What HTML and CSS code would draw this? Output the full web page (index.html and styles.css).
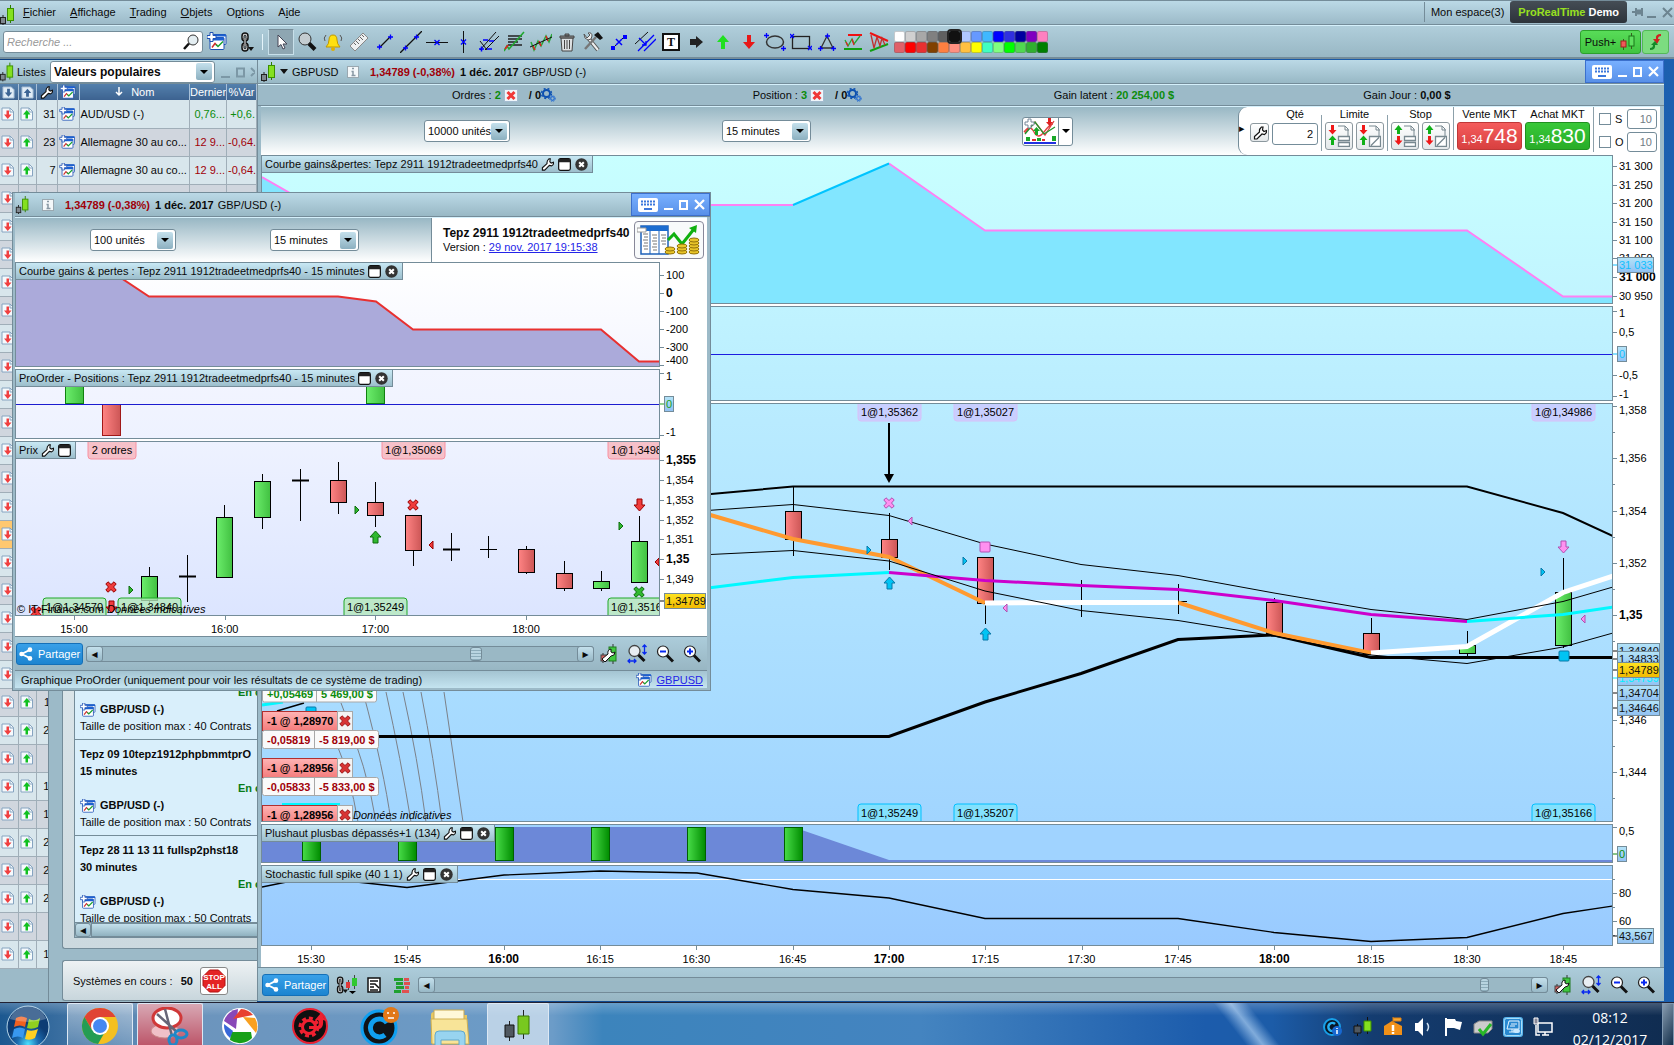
FILE: index.html
```html
<!DOCTYPE html>
<html lang="fr">
<head>
<meta charset="utf-8">
<title>ProRealTime Demo</title>
<link rel="stylesheet" href="styles.css">
</head>
<body>
<svg class="defs" aria-hidden="true">
  <defs>
    <linearGradient id="gGreen"><stop offset="0" stop-color="#6cee6c"/><stop offset="1" stop-color="#41c041"/></linearGradient>
    <linearGradient id="gRed"><stop offset="0" stop-color="#ff8484"/><stop offset="1" stop-color="#cc5656"/></linearGradient>
    <linearGradient id="gBar"><stop offset="0" stop-color="#48dc48"/><stop offset="1" stop-color="#008c00"/></linearGradient>
    <linearGradient id="gTag" x2="0" y2="1"><stop offset="0" stop-color="#b4e4f8"/><stop offset="1" stop-color="#90c0f2"/></linearGradient>
    <linearGradient id="gGold" x2="0" y2="1"><stop offset="0" stop-color="#ffe420"/><stop offset="1" stop-color="#f0b800"/></linearGradient>
    <linearGradient id="gOrder" x2="0" y2="1"><stop offset="0" stop-color="#ffb4b4"/><stop offset="1" stop-color="#f47c7c"/></linearGradient>
    <radialGradient id="gOrb" cx=".5" cy=".9"><stop offset="0" stop-color="#4ce0ff"/><stop offset=".5" stop-color="#1c6cb0"/><stop offset="1" stop-color="#0c3c74"/></radialGradient>
  </defs>
  <symbol id="candle" viewBox="0 0 16 20"><path d="M3 10v10" stroke="#222"/><rect x=".5" y="12.500" width="5" height="6" fill="#808890" stroke="#222"/><path d="M10.500 0v18" stroke="#2c7c00"/><rect x="7.500" y="3.500" width="6" height="12" fill="#84e020" stroke="#3c9000"/></symbol>
  <symbol id="wrench" viewBox="0 0 14 14"><path d="M1.500 10.500 6.500 6Q6 3 8.500 1l1.500 0-.5 3 1.500 1.500 2.500-1Q14 7 11.500 8.500L9 8l-5 5H1.500z" fill="#fff" stroke="#111" stroke-width="1.200"/></symbol>
  <symbol id="win" viewBox="0 0 14 14"><rect x=".7" y=".7" width="12.600" height="12.600" rx="2" fill="#fff" stroke="#111" stroke-width="1.300"/><path d="M1 4.500V2q0-1 1-1h10q1 0 1 1v2.500z" fill="#222"/></symbol>
  <symbol id="close" viewBox="0 0 14 14"><circle cx="7" cy="7" r="6.700" fill="#333"/><path d="M4.500 4.500l5 5m0-5-5 5" stroke="#fff" stroke-width="2.200"/></symbol>
  <symbol id="info" viewBox="0 0 12 12"><rect x=".5" y=".5" width="11" height="11" fill="#f4f8fa" stroke="#9aa8b0"/><path d="M5 2.500h2m-2.500 3H6V9.500M4.500 9.500h4" stroke="#8898a4" stroke-width="1.500" fill="none"/></symbol>
  <symbol id="addchart" viewBox="0 0 20 18"><rect x="6" y="2" width="13" height="10" rx="1" fill="#fff" stroke="#1c50b4"/><rect x="3" y="5" width="14" height="12" rx="1" fill="#fff" stroke="#1c50b4"/><path d="M3 5h14v3H3zM7 2h12v2H7z" fill="#1c60d0"/><path d="M5 15l3-4 2 2" stroke="#d03030" fill="none" stroke-width="1.500"/><path d="M9 12l2 2 5-5" stroke="#18a030" fill="none" stroke-width="1.500"/><path d="M3 0h3v3h3v3H6v3H3V6H0V3h3z" fill="#fff" stroke="#1c50b4"/></symbol>
  <symbol id="chain" viewBox="0 0 16 20"><rect x="4" y="1" width="6" height="8" rx="3" fill="#fff" stroke="#111" stroke-width="1.500"/><rect x="4" y="11" width="6" height="8" rx="3" fill="#fff" stroke="#111" stroke-width="1.500"/><rect x="6" y="3" width="2" height="4" rx="1" fill="#a0bcc8" stroke="#111"/><rect x="6" y="13" width="2" height="4" rx="1" fill="#a0bcc8" stroke="#111"/><path d="M7 6v8" stroke="#111" stroke-width="3"/><path d="M7 6v8" stroke="#fff"/><path d="M10 15h6l-3 4z" fill="#111"/></symbol>
  <symbol id="docdown" viewBox="0 0 14 14"><path d="M1 1h8l3.500 3.500V13H1z" fill="#f6fafd" stroke="#86a4c0"/><path d="M9 1v4h4" fill="none" stroke="#86a4c0"/><path d="M5.500 3.500h2.500v4h2.500l-3.700 4.500L3 7.500h2.500z" fill="#f04040"/></symbol>
  <symbol id="docup" viewBox="0 0 14 14"><path d="M1 1h8l3.500 3.500V13H1z" fill="#f6fafd" stroke="#86a4c0"/><path d="M9 1v4h4" fill="none" stroke="#86a4c0"/><path d="M5.500 11.500h2.500v-4h2.500L6.800 3 3 7.500h2.500z" fill="#10c020"/></symbol>
  <symbol id="hdown" viewBox="0 0 14 14"><path d="M1 1h9l3 3v9H1z" fill="#e0ecf6" stroke="#a0b8d0"/><path d="M5.500 3h3v4h2.500l-4 4.500L3 7h2.500z" fill="#3c6494"/></symbol>
  <symbol id="hup" viewBox="0 0 14 14"><path d="M1 1h9l3 3v9H1z" fill="#e0ecf6" stroke="#a0b8d0"/><path d="M5.500 11.500h3v-4H11L7 3 3 7.500h2.500z" fill="#3c6494"/></symbol>
  <symbol id="redx" viewBox="0 0 14 13"><rect x=".5" y=".5" width="13" height="12" fill="#f0f6fb" stroke="#a4bcd0"/><path d="M3.500 3l7 7m0-7-7 7" stroke="#f03838" stroke-width="3"/></symbol>
  <symbol id="gears" viewBox="0 0 15 14"><circle cx="5.500" cy="5.500" r="3.500" fill="none" stroke="#0c50b0" stroke-width="2"/><circle cx="5.500" cy="5.500" r="5" fill="none" stroke="#0c50b0" stroke-width="1.400" stroke-dasharray="2 2"/><circle cx="11.500" cy="10.500" r="1.800" fill="none" stroke="#2c70d0" stroke-width="1.300"/><circle cx="11.500" cy="10.500" r="2.900" fill="none" stroke="#2c70d0" stroke-dasharray="1.200 1.200"/></symbol>
  <symbol id="kbd" viewBox="0 0 20 14"><rect width="20" height="14" rx="2" fill="#fff"/><path d="M3 3.500h14M3 6.500h14" stroke="#3c78dc" stroke-width="2" stroke-dasharray="2 1"/><path d="M6 11h8" stroke="#3c78dc" stroke-width="2"/></symbol>
  <symbol id="share" viewBox="0 0 16 16"><path d="M13 3 3 8l10 5" fill="none" stroke="#fff" stroke-width="2"/><circle cx="12.500" cy="3" r="2.700" fill="#fff"/><circle cx="3" cy="8" r="2.700" fill="#fff"/><circle cx="12.500" cy="13" r="2.700" fill="#fff"/></symbol>
  <symbol id="cfgcandle" viewBox="0 0 18 20"><path d="M3 9v10M13 0v20" stroke="#333"/><rect x="1" y="11" width="6" height="6" fill="#d06060" stroke="#444"/><rect x="9" y="3" width="7" height="14" fill="#40c840" stroke="#207820"/><path d="M2 15l6-5q-1-4 3-5v3l2 1 2-1q0 4-4 4l-6 6z" fill="#fff" stroke="#111"/></symbol>
  <symbol id="zoomfit" viewBox="0 0 20 20"><circle cx="7.500" cy="7" r="5.500" fill="#e8eef2" stroke="#444" stroke-width="1.300"/><path d="M11.500 11l6 6" stroke="#111" stroke-width="3"/><path d="M17.500 1v9M15.500 3l2-2 2 2M15.500 8l2 2 2-2M1 17h8M3 15l-2 2 2 2M7 15l2 2-2 2" stroke="#0828f0" stroke-width="1.300" fill="none"/></symbol>
  <symbol id="zoomout" viewBox="0 0 18 18"><circle cx="7" cy="6.500" r="5.500" fill="#fff" stroke="#222" stroke-width="1.200"/><path d="M4 6.500h6" stroke="#0828f0" stroke-width="2"/><path d="M11 10.500l6 6" stroke="#111" stroke-width="3"/></symbol>
  <symbol id="zoomin" viewBox="0 0 18 18"><circle cx="7" cy="6.500" r="5.500" fill="#fff" stroke="#222" stroke-width="1.200"/><path d="M4 6.500h6M7 3.500v6" stroke="#0828f0" stroke-width="2"/><path d="M11 10.500l6 6" stroke="#111" stroke-width="3"/></symbol>
  <symbol id="order-ld" viewBox="0 0 22 22"><path d="M10 1h7l3 3v8M17 1v4h4" fill="none" stroke="#788890"/><path d="M10.500 11.500h11v4h-11zm0 6h11v4h-11z" fill="#fff" stroke="#788890" stroke-width="1.300"/><path d="M3 0h3v5h2.500L4.500 9.500.5 5H3z" fill="#f01818"/><path d="M3 20h3v-5h2.500L4.500 10.500.5 15H3z" fill="#10b018"/></symbol>
  <symbol id="order-lp" viewBox="0 0 22 22"><path d="M10 1h7l3 3v8M17 1v4h4" fill="none" stroke="#788890"/><path d="M10.500 11.500h11v10h-11zm1.500 9 8-8" fill="#fff" stroke="#788890" stroke-width="1.300"/><path d="M3 0h3v5h2.500L4.500 9.500.5 5H3z" fill="#f01818"/><path d="M3 20h3v-5h2.500L4.500 10.500.5 15H3z" fill="#10b018"/></symbol>
  <symbol id="order-sd" viewBox="0 0 22 22"><path d="M10 1h7l3 3v8M17 1v4h4" fill="none" stroke="#788890"/><path d="M10.500 11.500h11v4h-11zm0 6h11v4h-11z" fill="#fff" stroke="#788890" stroke-width="1.300"/><path d="M3 9h3V5h2.500L4.500 0 .5 5H3z" fill="#10b018"/><path d="M3 11h3v4.500h2.500l-4 4.500-4-4.500H3z" fill="#f01818"/></symbol>
  <symbol id="order-sp" viewBox="0 0 22 22"><path d="M10 1h7l3 3v8M17 1v4h4" fill="none" stroke="#788890"/><path d="M10.500 11.500h11v10h-11zm1.500 9 8-8" fill="#fff" stroke="#788890" stroke-width="1.300"/><path d="M3 9h3V5h2.500L4.500 0 .5 5H3z" fill="#10b018"/><path d="M3 11h3v4.500h2.500l-4 4.500-4-4.500H3z" fill="#f01818"/></symbol>
  <symbol id="xmark" viewBox="0 0 12 12"><path d="M3 .8 6 3.500 9 .8 11.200 3 8.500 6 11.200 9 9 11.200 6 8.500 3 11.200.8 9 3.500 6 .8 3z"/></symbol>
</svg>

<header class="menubar">
  <svg class="logo" width="16" height="20"><use href="#candle"/></svg>
  <nav class="menus">
    <a href="#"><u>F</u>ichier</a><a href="#"><u>A</u>ffichage</a><a href="#"><u>T</u>rading</a><a href="#"><u>O</u>bjets</a><a href="#">O<u>p</u>tions</a><a href="#">A<u>i</u>de</a>
  </nav>
  <span class="space">Mon espace(3)</span>
  <span class="brand"><em>ProRealTime</em> Demo</span>
  <svg class="syswin" width="44" height="14" fill="none" stroke="#6c8490" stroke-width="2"><path d="M2 7h4M6 3v8M12 3v8"/><path d="M6 7h6" stroke-width="5"/><path d="M17 12h9M33 3l9 9m0-9-9 9"/></svg>
</header>

<div class="toolbar">
  <label class="search"><input type="text" placeholder="Recherche ..." aria-label="Recherche"><svg width="16" height="16"><circle cx="10" cy="6" r="5" fill="#e4eef2" stroke="#333"/><path d="M6 9.500 1 15" stroke="#111" stroke-width="2.500"/></svg></label>
  <button class="tb gapadd" aria-label="Ajouter"><svg width="20" height="19"><use href="#addchart"/></svg></button>
  <button class="tb" aria-label="Lier"><svg width="16" height="20"><use href="#chain"/></svg></button>
  <span class="sep"></span>
  <div class="tools">
    <button class="tool on" aria-label="Pointeur"><svg width="20" height="20"><path d="M7 3v12l3-2.500 2 4.500 2-1-2-4h4z" fill="#fff" stroke="#445"/></svg></button>
    <button class="tool" aria-label="Loupe"><svg width="20" height="20"><circle cx="8" cy="7" r="6" fill="#c4ccd0" stroke="#333"/><path d="M12 11.500l6 6" stroke="#111" stroke-width="4"/></svg></button>
    <button class="tool" aria-label="Alarme"><svg width="22" height="20"><path d="M4 15q3-3 3-7 0-5 4-5t4 5q0 4 3 7z" fill="#ffe010" stroke="#c09800"/><circle cx="11" cy="17" r="2" fill="#e0b000"/><path d="M4 3Q1 6 3 9M18 3q3 3 1 6" fill="none" stroke="#555"/></svg></button>
    <button class="tool" aria-label="Règle"><svg width="20" height="20"><path d="M1 14 14 1l5 5L6 19z" fill="#eceff0" stroke="#888"/><path d="M5 11l2 2m0-4 3 3m-1-5 2 2m0-4 3 3m-1-5 2 2" stroke="#666"/></svg></button>
    <button class="tool" aria-label="Segment"><svg width="20" height="20"><path d="M5 15 15 5" stroke="#111" stroke-width="1.300"/><path d="M2 15h5M4.500 12.500v5M13 5h5M15.500 2.500v5" stroke="#00f" stroke-width="1.300"/></svg></button>
    <button class="tool" aria-label="Droite"><svg width="22" height="22"><path d="M0 22 22 0" stroke="#111" stroke-width="1.300"/><path d="M3 17h5M5.500 14.500v5M14 6h5M16.500 3.500v5" stroke="#00f" stroke-width="1.300"/></svg></button>
    <button class="tool" aria-label="Horizontale"><svg width="22" height="20"><path d="M0 10.500h22" stroke="#111"/><path d="M8.500 8l5 5m0-5-5 5" stroke="#00f" stroke-width="1.300"/></svg></button>
    <button class="tool" aria-label="Verticale"><svg width="20" height="22"><path d="M10.500 0v22" stroke="#111"/><path d="M8 8.500l5 5m0-5-5 5" stroke="#00f" stroke-width="1.300"/></svg></button>
    <button class="tool" aria-label="Fourche"><svg width="20" height="22"><path d="M1 19 17 1M6 19 20 5M1 10l7 9" stroke="#111" fill="none"/><path d="M0 18h5M2.500 15.500v5M8 18h5M10 10h5M4 9h5" stroke="#00f" stroke-width="1.500"/></svg></button>
    <button class="tool" aria-label="Fibonacci"><svg width="22" height="22"><path d="M4 5h14M4 8h14M4 11h10M4 14h14" stroke="#222" stroke-width="1.400"/><path d="M0 20l3-5 2 3L20 1" fill="none" stroke="#20a830" stroke-width="1.600"/><path d="M1 18l3-4" stroke="#e02020" stroke-width="1.500"/></svg></button>
    <button class="tool" aria-label="Régression"><svg width="22" height="20"><path d="M1 10l3 8 4-9 3 5 5-10 3 6 3-8" fill="none" stroke="#28a838" stroke-width="1.500"/><path d="M3 14l2 4M9 9l2 5M16 4l2 5" stroke="#e02020" stroke-width="1.500"/><path d="M0 15 22 5" stroke="#111"/></svg></button>
    <button class="tool" aria-label="Supprimer"><svg width="18" height="20"><path d="M3 6h12l-1 13H4z" fill="#dce0e2" stroke="#444"/><path d="M6.500 8v9M9 8v9M11.500 8v9" stroke="#444"/><path d="M2 4h14v2H2zM7 2h4v2H7z" fill="#888" stroke="#444"/></svg></button>
    <button class="tool" aria-label="Outils"><svg width="22" height="20"><path d="M7 7l9 11" stroke="#555" stroke-width="4"/><path d="M7 7l9 11" stroke="#eee" stroke-width="2"/><path d="M3 17 14 5" stroke="#777" stroke-width="2.500"/><path d="M12 3l4-3 5 6-3 2z" fill="#111"/><path d="M2 2l3 4 3-3-2-2q4-1 4 3T6 8Q2 7 2 2z" fill="#eee" stroke="#555"/></svg></button>
    <button class="tool" aria-label="Relier"><svg width="20" height="20"><path d="M4 16 16 4" stroke="#111"/><path d="M2 14h4v4H2zM14 3h4v4h-4z" fill="#00f"/><path d="M7 7l6 6m0-6-6 6" stroke="#00f" stroke-width="1.500"/></svg></button>
    <button class="tool" aria-label="Parallèles"><svg width="22" height="22"><path d="M1 13 14 1" stroke="#111"/><path d="M4 20 20 4M10 20 22 8" stroke="#00f" stroke-width="1.300"/><path d="M5 7l7 7m0-4v4H8" fill="none" stroke="#00f" stroke-width="1.300"/></svg></button>
    <button class="tool textool" aria-label="Texte">T</button>
    <button class="tool" aria-label="Flèche"><svg width="16" height="16"><path d="M1 5h6V2l7 6-7 6v-3H1z" fill="#222"/></svg></button>
    <button class="tool" aria-label="Flèche haut"><svg width="14" height="16"><path d="M5 15V8H1l6-7 6 7H9v7z" fill="#20e020"/></svg></button>
    <button class="tool" aria-label="Flèche bas"><svg width="14" height="16"><path d="M5 1v7H1l6 7 6-7H9V1z" fill="#e81818"/></svg></button>
    <button class="tool" aria-label="Ellipse"><svg width="22" height="20"><ellipse cx="11" cy="10" rx="8.500" ry="6" fill="none" stroke="#333" stroke-width="1.500"/><path d="M0 3.500h5M2.500 1v5M17 16.500h5M19.500 14v5" stroke="#00f" stroke-width="1.300"/></svg></button>
    <button class="tool" aria-label="Rectangle"><svg width="22" height="20"><rect x="2.500" y="4.500" width="17" height="12" fill="none" stroke="#222" stroke-width="1.300"/><path d="M0 2l4 4m0-4-4 4M18 14l4 4m0-4-4 4" stroke="#00f" stroke-width="1.300"/></svg></button>
    <button class="tool" aria-label="Triangle"><svg width="20" height="20"><path d="M10 4 4 16h12z" fill="none" stroke="#333" stroke-width="1.300"/><path d="M8 4h5M10.500 1.500v5M1 16.500h5M3.500 14v5M14 16.500h5M16.500 14v5" stroke="#00f" stroke-width="1.300"/></svg></button>
    <button class="tool" aria-label="Canal"><svg width="20" height="18"><path d="M5 2h14" stroke="#f01010" stroke-width="2"/><path d="M1 16h18" stroke="#10a010" stroke-width="2"/><path d="M2 7l3 6 4-7 2 5 6-8" fill="none" stroke="#20a830" stroke-width="1.300"/><path d="M9 6l2 6M3 9l2 4" stroke="#e02020" stroke-width="1.300"/></svg></button>
    <button class="tool" aria-label="Biseau"><svg width="20" height="20"><path d="M1 1l18 8" stroke="#f01010" stroke-width="2"/><path d="M1 19l18-7" stroke="#10a010" stroke-width="2"/><path d="M2 3l3 13 3-11 3 9 2-8 3 7" fill="none" stroke="#c03030" stroke-width="1.300"/></svg></button>
  </div>
  <div class="palette" id="palette"></div>
  <button class="push">Push+ <svg width="16" height="18"><path d="M3.500 6v11M11.500 0v16" stroke="#3c5c20"/><rect x="1" y="8" width="5" height="6" fill="#f05858" stroke="#a02020"/><rect x="9" y="3" width="5" height="10" fill="#60e060" stroke="#187818"/></svg></button>
  <button class="swap" aria-label="Inverser"><svg width="14" height="20"><path d="M12 2Q6 2 7 7H4l4 5 3-5H9q0-3 3-3z" fill="#d02020"/><path d="M1 18q6 0 5-5h3l-3-4-4 4h2q0 3-3 3z" fill="#148a28"/></svg></button>
</div>

<main class="desk">
  <section class="win lists">
    <header class="title">
      <svg width="15" height="20"><use href="#candle"/></svg>
      <label for="liste">Listes</label>
      <span class="pick big"><select id="liste"><option>Valeurs populaires</option></select></span>
      <svg width="36" height="14" fill="none" stroke="#7c98a6" stroke-width="2"><path d="M2 12h9M18 3.500h7v8h-7zM32 3l8 8m-8 0 8-8"/></svg>
    </header>
    <table>
      <colgroup><col class="c1"><col class="c1"><col class="c3"><col class="c4"><col><col class="c6"><col class="c7"></colgroup>
      <thead><tr>
        <th><svg width="13" height="13"><use href="#hdown"/></svg></th>
        <th><svg width="13" height="13"><use href="#hup"/></svg></th>
        <th><svg width="13" height="13"><use href="#wrench"/></svg></th>
        <th><svg width="16" height="14"><use href="#addchart"/></svg></th>
        <th><svg width="14" height="12"><path d="M5 1v8M2 6l3 3 3-3" stroke="#fff" stroke-width="1.500" fill="none"/></svg> Nom</th>
        <th>Dernier</th><th>%Var</th>
      </tr></thead>
      <tbody id="rows"></tbody>
    </table>
  </section>

  <section class="win systems">
    <div class="group">
      <div class="syslist">
        <article><h3>&nbsp;</h3><h3>&nbsp;</h3><p class="state">En cours</p><h4><svg width="16" height="14"><use href="#addchart"/></svg>GBP/USD (-)</h4><p>Taille de position max : 40 Contrats</p></article>
        <article><h3>Tepz 09 10tepz1912phpbmmtprO</h3><h3>15 minutes</h3><p class="state">En cours</p><h4><svg width="16" height="14"><use href="#addchart"/></svg>GBP/USD (-)</h4><p>Taille de position max : 50 Contrats</p></article>
        <article><h3>Tepz 28 11 13 11 fullsp2phst18</h3><h3>30 minutes</h3><p class="state">En cours</p><h4><svg width="16" height="14"><use href="#addchart"/></svg>GBP/USD (-)</h4><p>Taille de position max : 50 Contrats</p></article>
      </div>
      <div class="hbar"><button class="arr" aria-label="Gauche">◂</button><span class="fullthumb"></span></div>
    </div>
    <div class="group running">Systèmes en cours : <b>50</b>
      <button class="stop" aria-label="Tout arrêter"><svg width="24" height="24"><path d="M7.500 1h9L23 7.500v9L16.500 23h-9L1 16.500v-9z" fill="#e42424" stroke="#b01010"/><text x="12" y="11" class="stoptxt">STOP</text><text x="12" y="20" class="stoptxt">ALL</text></svg></button>
    </div>
  </section>

  <section class="win mainwin">
    <header class="title">
      <svg width="16" height="20"><use href="#candle"/></svg>
      <svg class="drop" width="15" height="8"><path d="M3 1h8L7 6z" fill="#111"/></svg>
      <span class="sym">GBPUSD</span>
      <svg class="inf" width="12" height="12"><use href="#info"/></svg>
      <b class="neg quote">1,34789 (-0,38%)</b><b>1 déc. 2017</b><span>GBP/USD (-)</span>
      <span class="winbtns"><svg width="20" height="14"><use href="#kbd"/></svg><svg width="42" height="14" fill="none" stroke="#fff" stroke-width="2"><path d="M1 11h9M17 3h7v8h-7z"/><path d="M32 2l9 9m0-9-9 9" stroke-width="2.200"/></svg></span>
    </header>
    <div class="stats">
      <span>Ordres : <b class="pos">2</b><svg class="cancel" width="14" height="13"><use href="#redx"/></svg><b>/ 0</b><svg width="15" height="14"><use href="#gears"/></svg></span>
      <span>Position : <b class="pos">3</b><svg class="cancel" width="14" height="13"><use href="#redx"/></svg><b>/ 0</b><svg width="15" height="14"><use href="#gears"/></svg></span>
      <span>Gain latent : <b class="pos">20 254,00 $</b></span>
      <span>Gain Jour : <b>0,00 $</b></span>
    </div>
    <div class="controls">
      <span class="pick u1"><select aria-label="Unités"><option>10000 unités</option></select></span>
      <span class="pick u2"><select aria-label="Période"><option>15 minutes</option></select></span>
      <button class="indic" aria-label="Indicateurs"><svg width="34" height="26"><path d="M2 15 12 4l10 13L31 3M1 14q6-8 10 0t10 0 9-8" fill="none" stroke="#e04040" stroke-width="1.300"/><path d="M2 16 12 4l9 12 11-7" fill="none" stroke="#209830" stroke-width="1.300"/><path d="M1 25h32" stroke="#2030e0" stroke-width="2"/><path d="M3 19h4v4H3zM14 20h4v3h-4zM29 18h4v5h-4z" fill="#18a828"/><path d="M9 21h4v2H9zM19 21h3v2h-3z" fill="#e03030"/><path d="M5 1h3v3h3v3H8v3H5V7H2V4h3z" fill="#fff" stroke="#789"/><path d="M25 0h3v4h2l-3.500 4L23 4h2z" fill="#e02020"/><path d="M12 17v-4h-2l3.500-4 3.500 4h-2v4z" fill="#18a828"/></svg><i></i></button>
      <form class="order">
        <i class="fold">▸</i>
        <button type="button" class="ob wr" aria-label="Réglages"><svg width="14" height="14"><use href="#wrench"/></svg></button>
        <div class="col qty"><label for="qte">Qté</label><input id="qte" type="text" value="2"></div>
        <fieldset><legend>Limite</legend><button type="button" class="ob" aria-label="Limite durée"><svg width="22" height="22"><use href="#order-ld"/></svg></button><button type="button" class="ob" aria-label="Limite ligne"><svg width="22" height="22"><use href="#order-lp"/></svg></button></fieldset>
        <fieldset><legend>Stop</legend><button type="button" class="ob" aria-label="Stop durée"><svg width="22" height="22"><use href="#order-sd"/></svg></button><button type="button" class="ob" aria-label="Stop ligne"><svg width="22" height="22"><use href="#order-sp"/></svg></button></fieldset>
        <div class="deals">
          <div class="col"><span>Vente MKT</span><button type="button" class="deal sell">1,34<b>748</b></button></div>
          <div class="col"><span>Achat MKT</span><button type="button" class="deal buy">1,34<b>830</b></button></div>
        </div>
        <div class="opts">
          <label><input type="checkbox"><span>S</span></label><input type="text" value="10" aria-label="Stop">
          <label><input type="checkbox"><span>O</span></label><input type="text" value="10" aria-label="Objectif">
        </div>
      </form>
    </div>
    <div class="charts">
      <div class="panel m1"><div class="plot"><svg><g transform="translate(-262,-156)">
        <path d="M262 177 311 205H793L889 163.500 985 230.500H1467L1563 296.500H1700V320H262z" fill="#82e6ff"/>
        <path d="M262 177 311 205H793M889 163.500 985 230.500H1467L1563 296.500H1700" class="ln" stroke="#ff80f4" stroke-width="2"/>
        <path d="M793 205 889 163.500" stroke="#00c4ff" stroke-width="2"/></g></svg>
        <div class="tab">Courbe gains&amp;pertes: Tepz 2911 1912tradeetmedprfs40<svg><use href="#wrench"/></svg><svg><use href="#win"/></svg><svg><use href="#close"/></svg></div></div>
        <svg class="axis" data-axis="m1"></svg></div>
      <div class="panel m2"><div class="plot"><svg><path d="M0 47.500h3000" stroke="#1c1ce0"/></svg></div><svg class="axis" data-axis="m2"></svg></div>
      <div class="panel m3"><div class="plot"><svg><g transform="translate(-262,-404)">
        <g class="ln" stroke="#7c8088">
          <path d="M337 745Q350 775 358 822"/><path d="M341 703Q368 770 376 822"/><path d="M363 692Q384 770 391 822"/><path d="M386 692Q401 760 411 822"/><path d="M403 692Q418 760 426 822"/><path d="M421 692Q434 760 442 822"/><path d="M444 692 463 822"/>
        </g>
        <g class="ln" stroke="#000">
          <path d="M600 500 711 494 793 486.500H1467L1563 513 1613 536" stroke-width="2"/>
          <path d="M378 736.500H889L985 702 1081 673.500 1178 639.500 1274 635 1371 657.500H1700" stroke-width="3"/>
          <path d="M277 711 304 703" stroke-width="1.500"/>
        </g>
        <g id="mainCandles"></g>
        <g class="ln">
          <path d="M700 512 793 539 889 557 985 603M1178 602.500 1274 633 1371 653" stroke="#ff9a30" stroke-width="4"/>
          <path d="M985 603 1081 602.500H1178M1371 653 1467 646.500 1563 592.500 1613 576" stroke="#fff" stroke-width="5"/>
          <path d="M700 589 793 577.500 889 572.500M1467 621.500 1563 614.500 1613 607M262 705 283 702M282 804.500H340" stroke="#00f8ff" stroke-width="3"/>
          <path d="M889 572.500 985 580.500 1081 585.500 1178 589.500 1274 600.500 1371 614.500 1467 621.500" stroke="#cc00cc" stroke-width="3"/>
          <path d="M700 511 793 504.500 889 515.500 985 544 1081 564.500 1178 575.500 1274 593 1371 609.500 1467 619.500 1563 601.500 1613 587M700 555 793 550.500 889 561 985 591 1081 610.500 1178 620.500 1274 636 1371 655 1467 663.500 1563 647 1613 633" stroke="#000"/>
          <path d="M889 423v52" stroke="#000" stroke-width="2"/>
        </g>
        <path d="M884 474h10l-5 9z"/>
        <g id="mainMarks"></g></g></svg></div><svg class="axis" data-axis="m3"></svg></div>
      <div class="panel m4"><div class="plot"><svg><g transform="translate(-262,-825)">
        <path d="M262 827H793L889 860H1700V863H262z" fill="#6c88d8"/><g id="greenBars"></g></g></svg>
        <div class="tab">Plushaut plusbas dépassés+1 (134)<svg><use href="#wrench"/></svg><svg><use href="#win"/></svg><svg><use href="#close"/></svg></div></div>
        <svg class="axis" data-axis="m4"></svg></div>
      <div class="panel m5"><div class="plot"><svg><g transform="translate(-262,-866)" class="ln">
        <path d="M262 879.500H1700" stroke="#fff"/>
        <path d="M262 887 311 877 407 887.500 504 875 600 871 697 873 793 889.500 889 898 985 918.500H1178L1274 932.500 1371 941.500 1467 937.500 1563 913.500 1613 906" stroke="#000" stroke-width="1.300"/></g></svg>
        <div class="tab">Stochastic full spike (40 1 1)<svg><use href="#wrench"/></svg><svg><use href="#win"/></svg><svg><use href="#close"/></svg></div></div>
        <svg class="axis" data-axis="m5"></svg></div>
      <svg class="times" data-times="main"></svg>
    </div>
    <footer class="bottom">
      <button class="partager"><svg width="14" height="16"><use href="#share"/></svg>Partager</button>
      <svg class="f1" width="24" height="20"><use href="#chain" width="14" height="20"/><path d="M14.500 5v10M20.500 0v14" stroke="#444"/><path d="M12 7h4v6h-4z" fill="#e03838"/><path d="M18 3h5v8h-5z" fill="#30c830"/><path d="M15 16h7l-3.500 3z"/></svg>
      <svg class="f2" width="14" height="16"><path d="M1 1h12v14H1z" fill="#fff" stroke="#111" stroke-width="1.500"/><path d="M3 4h8M3 7h5l4 4M3 10h4M3 13h8" stroke="#111" stroke-width="1.500" fill="none"/></svg>
      <svg class="f3" width="16" height="16"><path d="M0 1h9v3H0zM2 5h7v3H2zM2 9h8v3H2zM0 13h7v3H0z" fill="#20a030"/><path d="M10 1h5v3h-5zM10 5h6v3h-6zM11 9h4v3h-4zM8 13h7v3H8z" fill="#e05050"/></svg>
      <div class="scroll sm"><button class="arr" aria-label="Gauche">◂</button><i class="thumb"></i><button class="arr" aria-label="Droite">▸</button></div>
      <svg class="z" width="18" height="20"><use href="#cfgcandle"/></svg><svg class="z" width="20" height="20"><use href="#zoomfit"/></svg><svg class="z" width="18" height="18"><use href="#zoomout"/></svg><svg class="z" width="18" height="18"><use href="#zoomin"/></svg>
    </footer>
  </section>

  <section class="win popup">
    <header class="title">
      <svg width="16" height="18"><use href="#candle"/></svg>
      <svg class="inf" width="12" height="12"><use href="#info"/></svg>
      <b class="neg quote">1,34789 (-0,38%)</b><b>1 déc. 2017</b><span>GBP/USD (-)</span>
      <span class="winbtns"><svg width="20" height="14"><use href="#kbd"/></svg><svg width="42" height="14" fill="none" stroke="#fff" stroke-width="2"><path d="M1 11h9M17 3h7v8h-7z"/><path d="M32 2l9 9m0-9-9 9" stroke-width="2.200"/></svg></span>
    </header>
    <div class="controls">
      <span class="pick p1"><select aria-label="Unités"><option>100 unités</option></select></span>
      <span class="pick p2"><select aria-label="Période"><option>15 minutes</option></select></span>
      <div class="version"><div><b>Tepz 2911 1912tradeetmedprfs40</b><p>Version : <a href="#">29 nov. 2017 19:15:38</a></p></div>
        <button class="report" aria-label="Rapport"><svg width="64" height="32"><rect x="4" y="2" width="27" height="28" fill="#fff" stroke="#1c60b8" stroke-width="1.500"/><path d="M4 2h27v5H4z" fill="#1c6cd0"/><path d="M13 7v23M22 7v23" stroke="#1c60b8"/><path d="M6 10h5M7 13h4M6 16h5M7 19h4M6 22h5M7 25h4M15 11h5M16 14h4M15 17h5M16 20h4M15 23h5M16 26h4M24 11h5M25 14h4M24 17h5M25 20h4" stroke="#777"/><path d="M0 4h9v4H0z" fill="#fff" stroke="#999"/><path d="M31 16l6-6 8 10L57 5" fill="none" stroke="#10b010" stroke-width="3"/><path d="M52 4l8-3-1 8z" fill="#10b010"/><g fill="#e8c428" stroke="#907008"><ellipse cx="33" cy="28" rx="5" ry="2"/><ellipse cx="33" cy="25" rx="5" ry="2"/><ellipse cx="45" cy="28" rx="5" ry="2"/><ellipse cx="45" cy="25" rx="5" ry="2"/><ellipse cx="45" cy="22" rx="5" ry="2"/><ellipse cx="57" cy="28" rx="5" ry="2"/><ellipse cx="57" cy="25" rx="5" ry="2"/><ellipse cx="57" cy="22" rx="5" ry="2"/><ellipse cx="57" cy="19" rx="5" ry="2"/><ellipse cx="57" cy="16" rx="5" ry="2"/></g></svg></button></div>
    </div>
    <div class="charts">
      <div class="panel q1"><div class="plot"><svg><g transform="translate(-16,-263)">
        <path d="M16 262H97L149 296.500H338L376 301.500 413 329.500H601L639 361.500H661V370H16z" fill="#abaada"/>
        <path d="M97 262 149 296.500H338L376 301.500 413 329.500H601L639 361.500H661" class="ln" stroke="#e83030" stroke-width="2"/></g></svg>
        <div class="tab">Courbe gains &amp; pertes : Tepz 2911 1912tradeetmedprfs40 - 15 minutes<svg><use href="#win"/></svg><svg><use href="#close"/></svg></div></div>
        <svg class="axis" data-axis="q1"></svg></div>
      <div class="panel q2"><div class="plot"><svg><g transform="translate(-16,-370)">
        <rect x="65.500" y="384.500" width="18" height="19" fill="url(#gGreen)" stroke="#108010"/><rect x="366.500" y="384.500" width="18" height="19" fill="url(#gGreen)" stroke="#108010"/><rect x="102.500" y="404.500" width="18" height="31" fill="url(#gRed)" stroke="#a01818"/><path d="M16 404.500h645" stroke="#1c1cd0"/></g></svg>
        <div class="tab">ProOrder - Positions : Tepz 2911 1912tradeetmedprfs40 - 15 minutes<svg><use href="#win"/></svg><svg><use href="#close"/></svg></div></div>
        <svg class="axis" data-axis="q2"></svg></div>
      <div class="panel q3"><div class="plot"><svg><g transform="translate(-16,-442)"><g id="popCandles"></g><g id="popMarks"></g></g></svg>
        <div class="tab">Prix<svg><use href="#wrench"/></svg><svg><use href="#win"/></svg></div></div>
        <svg class="axis" data-axis="q3"></svg></div>
      <svg class="times" data-times="pop"></svg>
    </div>
    <footer class="bottom">
      <button class="partager"><svg width="14" height="16"><use href="#share"/></svg>Partager</button>
      <div class="scroll sp"><button class="arr" aria-label="Gauche">◂</button><i class="thumb"></i><button class="arr" aria-label="Droite">▸</button></div>
      <svg class="z" width="18" height="20"><use href="#cfgcandle"/></svg><svg class="z" width="20" height="20"><use href="#zoomfit"/></svg><svg class="z" width="18" height="18"><use href="#zoomout"/></svg><svg class="z" width="18" height="18"><use href="#zoomin"/></svg>
    </footer>
    <div class="status"><span>Graphique ProOrder (uniquement pour voir les résultats de ce système de trading)</span><svg width="16" height="14"><use href="#addchart"/></svg><a href="#">GBPUSD</a></div>
  </section>
</main>

<footer class="taskbar">
  <button class="orb" aria-label="Démarrer"><svg width="44" height="44"><circle cx="22" cy="22" r="21" fill="url(#gOrb)" stroke="#b4d4e8"/><path d="M10 13q5-3 11 0l-2 9q-5-3-11 0z" fill="#f06020"/><path d="M23 14q6 3 11-1l-2 9q-6 3-11 1z" fill="#90d020"/><path d="M8 24q6-3 11 0l-2 9q-5-3-11 0z" fill="#3898f0"/><path d="M21 25q5 2 11-1l-3 9q-5 3-10 1z" fill="#ffd020"/><path d="M4 14q4-12 18-13 14 1 18 13Q22 20 4 14z" fill="#fff" opacity=".25"/></svg></button>
  <button class="task open" aria-label="Chrome"><svg width="38" height="38"><circle cx="19" cy="19" r="18" fill="#f4c020"/><path d="M19 10h15.600a18 18 0 0 0-31.200 0L11 23z" fill="#e04434"/><path d="M3.400 10a18 18 0 0 0 13.600 27l8-14H11z" fill="#249c54"/><circle cx="19" cy="19" r="9" fill="#fff"/><circle cx="19" cy="19" r="7" fill="#4688f0"/></svg></button>
  <button class="task open snip" aria-label="Capture"><svg width="42" height="40"><ellipse cx="16" cy="24" rx="14" ry="7" fill="#f0c0c8" stroke="#c88"/><ellipse cx="18" cy="11" rx="14" ry="10" fill="#fff" stroke="#d03838" stroke-width="3"/><path d="M8 7l20 18M16 2l7 27" stroke="#667" stroke-width="2.500"/><ellipse cx="32" cy="27" rx="6" ry="4" fill="none" stroke="#2088c8" stroke-width="3"/><ellipse cx="24" cy="33" rx="4" ry="5" fill="none" stroke="#2088c8" stroke-width="3"/></svg></button>
  <button class="task" aria-label="Picasa"><svg width="38" height="38"><circle cx="19" cy="19" r="18" fill="#fff"/><path d="M17 2A17 17 0 0 0 3 14l12 8z" fill="#8848b8"/><path d="M20 2a17 17 0 0 1 12 6L12 12z" fill="#e84030"/><path d="M34 11a17 17 0 0 1 1 15L22 10z" fill="#f8a020"/><path d="M31 31a17 17 0 0 1-22 2l1-8h20z" fill="#18a018"/><path d="M3 17l9 7-3 7A17 17 0 0 1 3 17z" fill="#3868d8"/></svg></button>
  <button class="task" aria-label="Gestionnaire"><svg width="38" height="38"><circle cx="19" cy="19" r="17" fill="#101010" stroke="#e82030" stroke-width="2"/><circle cx="18" cy="20" r="6.500" fill="none" stroke="#f02030" stroke-width="3"/><circle cx="18" cy="20" r="9" fill="none" stroke="#f02030" stroke-width="3" stroke-dasharray="4 3"/><path d="M18 22v-3h9q2-3 0-6h-3l6-7 5 8-3-1q1 9-5 9z" fill="#f02030"/></svg></button>
  <button class="task" aria-label="Cleaner"><svg width="40" height="40"><circle cx="19" cy="21" r="17" fill="#101418" stroke="#10a0f0" stroke-width="3"/><path d="M27 16a9 9 0 1 0-2 12" fill="none" stroke="#10a0f0" stroke-width="5"/><circle cx="31" cy="8" r="8" fill="#e07818"/><path d="M28 5v2m6-2v2m-6 4h6" stroke="#fff" stroke-width="1.500"/></svg></button>
  <button class="task" aria-label="Explorateur"><svg width="42" height="40"><path d="M2 8q0-3 3-3h10l3 3h20v28H2z" fill="#e8c860"/><path d="M5 12V3h30v9" fill="#fff8d8" stroke="#c8a850"/><path d="M2 12h36l2 25H3z" fill="#f8e498" stroke="#d0b050"/><path d="M6 28q0-4 4-4h22q4 0 4 4v11h-6v-6H12v6H6z" fill="#98d4f0" stroke="#60a8cc"/></svg></button>
  <button class="task open prt" aria-label="ProRealTime"><svg width="30" height="36"><path d="M6.500 14v20M20.500 3v29" stroke="#222"/><path d="M2 18h9v12H2z" fill="#505860" stroke="#111"/><path d="M15 9h11v18H15z" fill="#78c820" stroke="#387800"/></svg></button>
  <div class="tray">
    <svg width="20" height="20"><circle cx="9" cy="10" r="8" fill="#081828" stroke="#18a0e8" stroke-width="2"/><path d="M12 7a4 4 0 1 0 0 6" fill="none" stroke="#28b0f0" stroke-width="2.500"/><circle cx="14" cy="14" r="5" fill="#1868d0"/><path d="M14 11v1m0 1v4" stroke="#fff" stroke-width="1.500"/></svg>
    <svg width="20" height="20"><path d="M4.500 7v12M14.500 0v17" stroke="#111"/><path d="M1 9h7v7H1z" fill="#505860" stroke="#111"/><path d="M11 4h7v10h-7z" fill="#84e020" stroke="#3c9000"/></svg>
    <svg width="20" height="20"><path d="M1 9l8-5 10 5v9H1z" fill="#f09018"/><path d="M10 0v6M10 1h8v3h-8" fill="#f8a830" stroke="#e08010"/><path d="M10 8v6m0 1v2" stroke="#fff" stroke-width="2.500"/></svg>
    <svg width="20" height="20"><path d="M2 6h3l5-5v18l-5-5H2z" fill="#fff"/><path d="M14 6q3 4 0 8" fill="none" stroke="#cde" stroke-width="1.500"/></svg>
    <svg width="20" height="20"><path d="M3 1v18" stroke="#fff" stroke-width="2"/><path d="M4 2h8l1 2 6 1-2 8-6-2H4z" fill="#fff"/></svg>
    <svg width="20" height="20"><path d="M1 7l5-3h13v8l-4 4H1z" fill="#ccc" stroke="#888"/><path d="M6 12l4 5 8-10" fill="none" stroke="#28b828" stroke-width="3"/></svg>
    <svg width="20" height="20"><rect width="20" height="20" rx="3" fill="#58b4ec"/><rect x="1.500" y="1.500" width="17" height="17" rx="2" fill="#2888d0" stroke="#a8dcf8"/><path d="M6 4h10v8H4zM6 15h5M9 12v3M8 7h6M7 9h5" fill="none" stroke="#e4f4ff"/><rect x="10" y="12" width="7" height="4" rx="2" fill="#c8e8ff"/></svg>
    <svg width="20" height="20"><path d="M5 6h14v9H5z" fill="#183c68" stroke="#fff" stroke-width="1.500"/><path d="M9 18h7M12 15v3M3 8v10h4" stroke="#fff" stroke-width="1.500" fill="none"/><path d="M1 1h4v6H1z" fill="#889" stroke="#fff"/></svg>
  </div>
  <div class="clock"><span>08:12</span><span>02/12/2017</span></div>
  <button class="showdesk" aria-label="Bureau"></button>
</footer>
<script src="app.js"></script>
</body>
</html>
```
FILE: styles.css
```css
* { box-sizing: border-box; }
html, body { margin: 0; height: 100%; overflow: hidden; }
body { display: flex; flex-direction: column; font: 11px/14px "Liberation Sans", Arial, sans-serif; color: #0a0a0a; background: #0c4a8c; }
button, input, select { font: inherit; color: inherit; margin: 0; padding: 0; border: 0; background: none; }
a { color: inherit; text-decoration: none; }
svg { flex: none; display: block; }
h3, h4, p { margin: 0; font-size: 11px; }
p { font-weight: normal; }
.defs { position: absolute; width: 0; height: 0; }
.neg { color: #a00008; }
.pos { color: #0c8c0c; }
.ln { fill: none; }
svg text { font: 11px "Liberation Sans", Arial, sans-serif; }
svg text.b { font-weight: bold; }
svg text.big { font-size: 12px; }
svg text.it { font-style: italic; }

.menubar { display: flex; align-items: center; height: 25px; flex: none; padding-bottom: 1px; border-top: 1px solid #748c99; border-bottom: 1px solid #748c99; background: linear-gradient(#bbd9e6, #9cbac8); }
.logo { margin-top: 6px; }
.menus { display: flex; flex: 1; padding-left: 7px; gap: 14px; }
.space { border-left: 1px solid #748c99; padding: 3px 6px; }
.brand { background: linear-gradient(#454d55, #2c333a); color: #fff; border-radius: 3px; padding: 4px 8px; font-weight: bold; height: 22px; }
.brand em { color: #98e020; font-style: normal; }
.syswin { margin-left: 3px; }

.toolbar { display: flex; align-items: center; height: 34px; flex: none; border-top: 1px solid #d5f0fb; border-bottom: 2px solid #748c99; background: linear-gradient(#b0cedb, #98b7c4); padding: 0 5px 0 3px; }
.search { display: flex; align-items: center; width: 200px; height: 22px; background: #fff; border: 1px solid #748c99; border-radius: 3px; padding: 0 3px; }
.search input { flex: 1; min-width: 0; font-style: italic; outline: 0; }
.search input::placeholder { color: #999; }
.tb { width: 20px; display: grid; place-items: center; margin-left: 9px; }
.tb.gapadd { margin-left: 4px; }
.sep { width: 1px; height: 16px; background: #e4f4fa; margin: 0 5px 0 6px; }
.tools { display: flex; }
.tool { width: 26px; height: 26px; display: grid; place-items: center; }
.tool.on { background: #8ea6b2; border: 1px solid #c8e0ea; border-top-color: #768c98; }
.tool.textool { width: 18px; height: 18px; margin: 4px; background: #fff; border: 2px solid #111; font: bold 12px/14px "Liberation Serif", serif; }
.palette { display: grid; grid-template-columns: repeat(14, 11px); grid-auto-rows: 11px; margin-left: 2px; }
.palette i { border-radius: 2px; border: 1px solid rgba(90,100,110,.35); }
.palette i.sel { outline: 2px solid #222; border: 0; z-index: 1; }
.push { margin-left: auto; height: 24px; width: 61px; display: flex; align-items: center; justify-content: center; gap: 4px; background: linear-gradient(#58dc58, #40c440); border: 1px solid #2ca02c; border-radius: 3px; }
.swap { width: 27px; height: 24px; margin-left: 1px; display: grid; place-items: center; background: #7cdc80; border: 1px solid #54b858; border-radius: 3px; }

.desk { flex: 1; min-height: 0; position: relative; overflow: hidden; background: linear-gradient(90deg, #0c4080, #1c60b0); }
.win { position: absolute; display: flex; flex-direction: column; background: #9cbac8; overflow: hidden; }
.title { display: flex; align-items: center; flex: none; height: 24px; border-bottom: 1px solid #748c99; background: linear-gradient(#bbd9e6, #98b8c5); }
.pick { display: inline-grid; height: 22px; background: #fff; border: 1px solid #748c99; border-radius: 3px; }
.pick select, .pick::before, .pick::after { grid-area: 1 / 1; }
.pick select { appearance: none; width: 100%; outline: 0; padding-left: 3px; line-height: 16px; }
.pick::before, .pick::after { content: ""; justify-self: end; align-self: center; pointer-events: none; z-index: 1; }
.pick::before { width: 16px; height: 17px; margin-right: 2px; border-radius: 2px; background: linear-gradient(#c4e0ec, #8cb0c0); }
.pick::after { margin-right: 6px; border: 4px solid transparent; border-top-color: #000; border-bottom: 0; }
.pick.big { width: 165px; height: 22px; }
.pick.big select { font-weight: bold; font-size: 12px; }

.lists { left: 0; top: 1px; width: 257px; bottom: 0; }
.lists .title { gap: 1px; }
.lists .title label { width: 33px; padding-left: 1px; }
.lists .title svg:last-child { margin-left: 3px; }
.lists table { table-layout: fixed; width: 257px; border-collapse: collapse; }
.c1 { width: 18px; } .c3 { width: 21px; } .c4 { width: 22px; } .c6 { width: 37px; } .c7 { width: 30px; }
.lists th { height: 16px; padding: 0; background: linear-gradient(#5480ac, #3c6290); color: #fff; font-weight: normal; line-height: 12px; overflow: hidden; white-space: nowrap; border-right: 1px solid #a8c0d8; }
.lists th svg { display: inline-block; vertical-align: -2px; }
.lists td { height: 28px; padding: 0 1px; border-right: 1px solid #a0aeb8; border-bottom: 1px solid #a0aeb8; white-space: nowrap; overflow: hidden; background: #d8e6ec; }
.lists tr:nth-child(even) td { background: #d0d6de; }
.lists tr.hot td { background: #ffc870; }
.lists td:nth-child(3) { text-align: right; padding-right: 1px; }
.up { color: #0c8c0c; } .down { color: #a00008; }
.lists td.up, .lists td.down { text-align: right; }

.systems { left: 48px; top: 577px; width: 209px; bottom: 0; border-left: 1px solid #748c99; padding: 4px 0 1px 13px; background: #9cbac8; gap: 11px; }
.group { border: 1px solid #748c99; border-right: 0; border-radius: 3px 0 0 3px; background: linear-gradient(#dce6ea, #ccd9df); padding: 0 0 10px 11px; flex: none; }
.syslist { border-left: 1px solid #748c99; height: 278px; overflow: hidden; background: #d9effb; margin-top: 3px; }
.syslist article { height: 96px; border-bottom: 1px solid #748c99; padding: 6px 0 0 5px; line-height: 17px; white-space: nowrap; }
.syslist h4 { display: flex; gap: 4px; align-items: center; }
.state { color: #087c18; font-weight: bold; padding-left: 158px; }
.hbar { display: flex; height: 16px; border: 1px solid #748c99; border-right: 0; background: #9cbac8; }
.arr { width: 16px; flex: none; border: 1px solid #748c99; border-radius: 3px; background: linear-gradient(#c4e0ec, #98b8c6); font: 12px/12px "DejaVu Sans", sans-serif; }
.fullthumb { flex: 1; border: 1px solid #748c99; border-right: 0; background: linear-gradient(#c4e0ec, #90b2c0); }
.running { display: flex; align-items: center; gap: 5px; padding: 0 0 0 10px; height: 41px; background: linear-gradient(#eef2f4, #c8d6dc); white-space: pre; }
.stop { width: 28px; height: 28px; margin-left: 2px; border: 1px solid #888; border-radius: 3px; background: #fff; display: grid; place-items: center; }
svg text.stoptxt { font: bold 8px "Liberation Sans", Arial, sans-serif; fill: #fff; text-anchor: middle; }

.mainwin { left: 257px; right: 10px; top: 1px; bottom: 1px; border-left: 1px solid #748c99; }
.mainwin .title { padding-left: 3px; }
.sym { width: 55px; }
.inf { margin-right: 11px; }
.quote { margin-right: 5px; }
.title b + span { margin-left: 4px; }
.winbtns { margin-left: auto; align-self: stretch; width: 79px; display: flex; align-items: center; justify-content: center; gap: 5px; padding-left: 1px; background: linear-gradient(#78b0ff, #5890e8); border: 1px solid #3c70cc; }
.stats { display: grid; grid-template-columns: 302fr 305fr 308fr 278fr; padding: 0 118px 0 95px; height: 22px; flex: none; align-items: center; justify-items: center; border-top: 1px solid #d5f0fb; border-bottom: 1px solid #748c99; }
.stats span { display: flex; align-items: center; white-space: pre; }
.cancel { margin: 0 11px 0 3px; }
.controls { display: flex; align-items: center; flex: none; background: linear-gradient(#98b7c4, #fff); }
.mainwin .controls { height: 49px; margin: 0 4px 0 3px; border-top: 1px solid #d5f0fb; }
.u1 { width: 86px; margin-left: 163px; }
.u2 { width: 89px; margin-left: 212px; }
.indic { width: 51px; height: 29px; margin-left: 211px; display: flex; align-items: center; background: #fff; border: 1px solid #748c99; border-radius: 3px; }
.indic i { margin-left: 1px; border-left: 1px solid #748c99; height: 27px; width: 14px; display: grid; place-items: center; }
.indic i::after { content: ""; border: 4px solid transparent; border-top-color: #000; border-bottom: 0; }
.order { margin-left: auto; height: 48px; display: flex; align-items: flex-start; background: #fff; border-left: 1px solid #748c99; border-radius: 9px 0 0 9px; padding: 0 3px 0 0; }
.fold { width: 11px; font: 11px/44px "DejaVu Sans", sans-serif; }
.ob { width: 28px; height: 28px; display: grid; place-items: center; border: 1px solid #8c989e; border-radius: 3px; background: linear-gradient(#fff, #e4e8ea); }
.ob.wr { width: 19px; height: 19px; margin: 16px 3px 0 0; }
.col { display: flex; flex-direction: column; text-align: center; }
.qty input { width: 46px; height: 22px; margin-top: 2px; border: 1px solid #748c99; border-radius: 3px; text-align: right; padding-right: 4px; }
fieldset { margin: 0 0 0 3px; border: 0; border-left: 1px solid #8ca0aa; padding: 0 3px; display: grid; grid-template-columns: 28px 28px; gap: 3px; height: 44px; }
legend { padding: 0; margin: 0 auto; height: 15px; width: 59px; text-align: center; }
fieldset + fieldset { margin-left: 0; }
.deals { display: flex; gap: 3px; border-left: 1px solid #8ca0aa; padding: 0 3px; }
.deal { width: 65px; height: 28px; margin-top: 1px; color: #fff; border-radius: 3px; line-height: 26px; white-space: nowrap; }
.deal b { font-weight: normal; font-size: 21px; }
.sell { background: linear-gradient(#f45c5c, #d84040); border: 1px solid #c03838; }
.buy { background: linear-gradient(#38c838, #28ac28); border: 1px solid #209020; }
.opts { display: grid; grid-template-columns: 28px 30px; gap: 3px 0; padding: 2px 0 0 5px; border-left: 1px solid #8ca0aa; }
.opts label { display: flex; align-items: center; gap: 4px; }
.opts [type=checkbox] { appearance: none; width: 12px; height: 12px; border: 1px solid #748c99; background: #fff; }
.opts [type=text] { height: 20px; width: 30px; border: 1px solid #748c99; border-radius: 3px; text-align: right; padding-right: 4px; color: #707c84; }

.charts { display: flex; flex-direction: column; gap: 2px; background: #fff; flex: none; }
.mainwin .charts { flex: 1; min-height: 0; margin: 0 4px 0 3px; }
.panel { display: grid; grid-template-columns: 1fr 47px; grid-template-rows: minmax(0, 1fr); flex: none; }
.plot { position: relative; min-width: 0; border: 1px solid #748c99; overflow: hidden; }
.plot > svg { position: absolute; width: 100%; height: 100%; }
.axis { width: 47px; height: 100%; overflow: visible; }
.times { width: 100%; height: 21px; margin-top: -2px; }
.m1 { height: 149px; } .m1 .plot { background: linear-gradient(#c8ffff, #c1f4ff); }
.m2 { height: 95px; } .m2 .plot { background: linear-gradient(#c0f3ff, #baedff); }
.m3 { flex: 1; min-height: 0; } .m3 .plot { background: linear-gradient(#baecff, #a1d5ff); }
.m4 { height: 39px; } .m4 .plot { background: #a0d3ff; }
.m5 { height: 81px; } .m5 .plot { background: linear-gradient(#9fd1ff, #99caff); }
.tab { position: absolute; left: 0; top: 0; display: flex; align-items: center; gap: 4px; height: 17px; padding: 0 4px 0 3px; white-space: nowrap; background: linear-gradient(#c8e8f4, #9cbecc); border-right: 1px solid #748c99; border-bottom: 1px solid #748c99; }
.tab svg { width: 13px; height: 13px; }
.tab svg:first-child { margin-left: -1px; }

.bottom { display: flex; align-items: center; flex: none; height: 34px; border-top: 1px solid #748c99; background: linear-gradient(#acccda, #98b6c3); }
.mainwin .bottom { padding: 0 9px 0 4px; }
.partager { display: flex; align-items: center; gap: 5px; width: 67px; height: 22px; padding-left: 2px; color: #fff; border: 1px solid #1470b8; border-radius: 3px; background: linear-gradient(#38a0e8, #1c84d0); }
.f1 { margin-left: 5px; } .f2 { margin-left: 9px; } .f3 { margin-left: 13px; }
.scroll { flex: 1; display: flex; align-items: stretch; height: 16px; border: 1px solid #748c99; border-radius: 3px; background: #9ab8c5; }
.scroll .arr { margin: -1px; width: 17px; }
.scroll.sm { margin: 0 0 0 8px; }
.scroll.sp { margin: 0 0 0 3px; }
.thumb { width: 12px; margin: 0 0 0 auto; border: 1px solid #748c99; border-radius: 3px; background: repeating-linear-gradient(#b8d4e0 0 2px, #8cacba 2px 3px); }
.sm .thumb { width: 9px; margin-right: 43px; }
.sp .thumb { margin-right: 96px; }
.z { margin-left: 9px; }
.scroll + .z { margin-left: 6px; }

.popup { left: 12px; top: 133px; width: 699px; padding: 0 3px 2px 2px; border: 1px solid #748c99; }
.popup .title { margin-right: -3px; }
.popup .title .inf { margin-left: 11px; }
.popup .controls { height: 45px; border-top: 1px solid #d5f0fb; }
.p1 { width: 86px; margin-left: 75px; }
.p2 { width: 89px; margin-left: 94px; }
.version { margin-left: auto; width: 276px; height: 44px; display: flex; align-items: center; justify-content: space-between; border-left: 1px solid #748c99; background: #fff; padding: 0 3px 0 11px; }
.version b { font-size: 12px; }
.version a, .status a { color: #2424e8; text-decoration: underline; }
.report { width: 70px; height: 38px; display: grid; place-items: center; border: 1px solid #889; border-radius: 4px; background: #f8fafb; }
.q1 { height: 105px; } .q1 .plot { background: linear-gradient(#fff, #f4f6ff); }
.q2 { height: 70px; } .q2 .plot { background: linear-gradient(#f3f5ff, #eef2ff); }
.q3 { height: 175px; } .q3 .plot { background: linear-gradient(#eef2ff, #dce5ff); }
.popup .times { height: 20px; }
.popup .bottom { padding: 0 6px 0 1px; }
.status { display: flex; align-items: center; gap: 5px; height: 18px; border-top: 1px solid #748c99; background: linear-gradient(#a4c4d2, #c4e4f0); padding: 0 4px 0 6px; }
.status span { flex: 1; }

.taskbar { display: flex; align-items: center; flex: none; height: 43px; overflow: hidden; border-top: 1px solid #223; background: linear-gradient(rgba(255,255,255,.22), rgba(255,255,255,0) 30%), linear-gradient(52deg, transparent 73%, rgba(170,205,240,.7) 74%, transparent 75%), linear-gradient(90deg, #1c5890, #6c94bc 10%, #6c9cc8 33%, #3c84bc 36%, #4484c0 55%, #1c5cac 72%, #1c5ca8 76%, #143c70 82%, #102c50); }
.orb { margin: 5px 17px 0 6px; width: 44px; height: 44px; }
.task { width: 66px; height: 43px; margin-right: 4px; display: grid; place-items: start center; padding-top: 3px; border: 1px solid transparent; flex: none; }
.task.open { border-color: #dce8f4; border-bottom: 0; background: linear-gradient(rgba(255,255,255,.45), rgba(255,255,255,.15)); border-radius: 2px; }
.task.snip { background: linear-gradient(#d8a8b4, #bc5468); }
.task.prt { width: 62px; background: rgba(220,232,244,.7); }
.tray { margin-left: auto; display: flex; gap: 10px; padding-top: 6px; }
.clock { width: 102px; margin-left: 6px; padding-top: 9px; display: flex; flex-direction: column; align-items: center; color: #fff; font: 14px/22px "Open Sans", "Noto Sans", sans-serif; }
.showdesk { width: 12px; height: 42px; margin-left: 1px; border: 1px solid #8098b0; border-bottom: 0; background: linear-gradient(120deg, #889cb0, #14304c); }
```
FILE: app.js
```js
const put = (el, html) => { el.insertAdjacentHTML('beforeend', html); };
const byId = id => document.getElementById(id);

// Drawing colours of the toolbar
const colours = ['#fff', '#d0d0d0', '#a8a8a8', '#808080', '#606060', '#111', '#b0c8ff', '#6699ff', '#40b8ff', '#00f', '#3030e0', '#0000a0', '#8000c0', '#ff80c0',
  '#e06068', '#f00', '#e83030', '#804000', '#ff8040', '#ff9080', '#ffc040', '#ff0', '#40ffc0', '#80ff80', '#0f0', '#50d850', '#30b030', '#008000'];
put(byId('palette'), colours.map((c, i) => `<i${i === 5 ? ' class="sel"' : ''} style="background:${c}"></i>`).join(''));

// Watch list
const quotes = [['31', 'AUD/USD (-)', '0,76...', '+0,6.', 'up'], ['23', 'Allemagne 30 au co...', '12 9...', '-0,64.', 'down'], ['7', 'Allemagne 30 au co...', '12 9...', '-0,64.', 'down']];
const counts = { 21: '11', 22: '22', 24: '12', 25: '13', 26: '21', 27: '22', 28: '23', 30: '14' };
let rows = '';
for (let i = 0; i < 31; i++) {
  const q = quotes[i];
  const icon = n => `<svg width="14" height="14"><use href="#${n}"/></svg>`;
  rows += `<tr${i === 15 ? ' class="hot"' : ''}><td>${icon('docdown')}</td><td>${icon('docup')}</td><td>${q ? q[0] : counts[i] || ''}</td>` +
    (q ? `<td><svg width="17" height="14"><use href="#addchart"/></svg></td><td>${q[1]}</td><td class="${q[4]}">${q[2]}</td><td class="${q[4]}">${q[3]}</td>` : '<td></td><td></td><td></td><td></td>') + '</tr>';
}
put(byId('rows'), rows);

// Price scales: [y, label, bold, tick y]; tags: [top, label, fill, text colour, width]
const axes = {
  m1: { top: 155, labels: [[166, '31 300'], [185, '31 250'], [203, '31 200'], [222, '31 150'], [240, '31 100'], [258, '31 050'], [277, '31 000', 1], [296, '30 950']], tags: [[257, '31 033', 'gTag', '#10c0ff', 36]] },
  m2: { top: 306, labels: [[313, '1', 0, 311], [332, '0,5'], [375, '-0,5'], [394, '-1', 0, 396]], tags: [[346, '0', 'gTag', '#10c0ff', 9]] },
  m3: { top: 403, labels: [[410, '1,358', 0, 406], [458, '1,356'], [511, '1,354'], [563, '1,352'], [615, '1,35', 1], [720, '1,346'], [772, '1,344']], minor: [432, 484, 537, 589, 641, 746, 798],
    tags: [[643, '1,34840', 'gTag', '#111', 42], [651, '1,34833', 'gTag', '#111', 42], [670, '1,34739', 'gTag', '#00f0ff', 42], [662, '1,34789', 'gGold', '#111', 42], [685, '1,34704', 'gTag', '#111', 42], [700, '1,34646', 'gTag', '#111', 42]] },
  m4: { top: 824, labels: [[831, '0,5', 0, 827]], tags: [[846, '0', 'gTag', '#0c8c0c', 9]] },
  m5: { top: 865, labels: [[893, '80'], [921, '60']], minor: [879, 907, 935], tags: [[928, '43,567', 'gTag', '#111', 36]] },
  q1: { top: 262, labels: [[275, '100'], [293, '0', 1], [311, '-100'], [329, '-200'], [347, '-300'], [360, '-400', 0, 365]] },
  q2: { top: 369, labels: [[376, '1', 0, 373], [432, '-1', 0, 435]], tags: [[396, '0', 'gTag', '#20a020', 9]] },
  q3: { top: 441, labels: [[460, '1,355', 1], [480, '1,354'], [500, '1,353'], [520, '1,352'], [539, '1,351'], [559, '1,35', 1], [579, '1,349']], tags: [[593, '1,34789', 'gGold', '#111', 41]] }
};
document.querySelectorAll('[data-axis]').forEach(svg => {
  const a = axes[svg.dataset.axis];
  let s = `<g transform="translate(0,${-a.top})">`;
  for (const [y, t, bold, tick] of a.labels) s += `<path d="M0 ${(tick || y) + .5}h4" stroke="#748c99"/><text x="6" y="${y + 4}"${bold ? ' class="b big"' : ''}>${t}</text>`;
  for (const y of a.minor || []) s += `<path d="M0 ${y + .5}h2" stroke="#748c99"/>`;
  for (const [y, t, f, c, w] of a.tags || []) s += `<path d="M0 ${y + 8}h4" stroke="${c}"/><rect x="4.500" y="${y + .5}" width="${w}" height="15" fill="url(#${f})" stroke="#748c99"/><text x="6" y="${y + 12}" fill="${c}">${t}</text>`;
  put(svg, s + '</g>');
});

// Time scales
const main = ['15:30', '15:45', '16:00', '16:15', '16:30', '16:45', '17:00', '17:15', '17:30', '17:45', '18:00', '18:15', '18:30', '18:45'];
const pop = ['15:00', '16:00', '17:00', '18:00'];
const time = (x, t, bold) => `<path d="M${Math.round(x)}.5 0v4" stroke="#748c99"/><text x="${x}" y="17" text-anchor="middle"${bold ? ' class="b big"' : ''}>${t}</text>`;
put(document.querySelector('[data-times=main]'), main.map((t, i) => time(50 + i * 96.33, t, t.endsWith(':00'))).join(''));
put(document.querySelector('[data-times=pop]'), pop.map((t, i) => time(59 + i * 150.7, t)).join(''));

// Candles: [x, high, body top, body bottom, low, kind]
const candle = ([x, h, t, b, l, k]) => {
  const wick = `<path d="M${x}.5 ${h}V${l}" stroke="#000"/>`;
  return k === 'd' ? wick + `<path d="M${x - 8} ${t}.5h17" stroke="#000" stroke-width="${b}"/>` : wick + `<rect x="${x - 8}.5" y="${t}.5" width="16" height="${b - t}" fill="url(#${k === 'r' ? 'gRed' : 'gGreen'})" stroke="#000"/>`;
};
put(byId('mainCandles'), [[793, 486, 511, 539, 556, 'r'], [889, 513, 539, 557, 570, 'r'], [985, 557, 557, 603, 624, 'r'], [1081, 580, 602, 1, 617, 'd'], [1178, 584, 601, 1, 614, 'd'], [1274, 598, 602, 633, 634, 'r'], [1371, 618, 633, 654, 655, 'r'], [1467, 631, 645, 653, 657, 'g'], [1563, 558, 592, 645, 648, 'g']].map(candle).join(''));
put(byId('popCandles'), [[149, 567, 576, 600, 606, 'g'], [187, 555, 576, 2, 602, 'd'], [224, 505, 517, 577, 577, 'g'], [262, 474, 481, 517, 529, 'g'], [300, 469, 480, 2, 521, 'd'], [338, 462, 480, 502, 514, 'r'], [375, 482, 502, 515, 527, 'r'], [413, 515, 515, 550, 566, 'r'], [451, 533, 549, 2, 561, 'd'], [488, 536, 549, 1, 558, 'd'], [526, 546, 549, 572, 574, 'r'], [564, 561, 573, 588, 591, 'r'], [601, 571, 581, 588, 591, 'g'], [639, 516, 541, 582, 583, 'g']].map(candle).join(''));
put(byId('greenBars'), [0, 1, 2, 3, 4, 5].map(i => `<rect x="${Math.round(302 + i * 96.33)}.5" y="827.5" width="18" height="33" fill="url(#gBar)" stroke="#006000"/>`).join(''));

const cross = (x, y, f, s) => `<use href="#xmark" x="${x - 6}" y="${y - 6}" width="12" height="12" fill="${f}" stroke="${s}"/>`;
const arrow = (x, y, d, f, s) => `<path d="M${x - 2} ${y - 6 * d}h5v${6 * d}h3l-5.500 ${6 * d}-5.500 ${-6 * d}h3z" fill="${f}" stroke="${s}"/>`;
const tri = (x, y, d, f, s) => `<path d="M${x - 2 * d} ${y - 4}v8l${4 * d}-4z" fill="${f}" stroke="${s}"/>`;
const square = (x, y, f, s) => `<rect x="${x - 5}" y="${y - 5}" width="10" height="10" rx="1" fill="${f}" stroke="${s}"/>`;
const tag = (x, y, w, t, f, s) => `<rect x="${x}" y="${y}" width="${w}" height="22" rx="3" fill="${f}" fill-opacity=".8" stroke="${s}"/>` + `<text x="${x + w / 2}" y="${y < 500 ? y + 17 : y + 13}" text-anchor="middle">${t}</text>`;
const pink = ['#ff90f0', '#b050b0'], cyan = ['#00c4f4', '#0878a8'], red = ['#f03c3c', '#900'], green = ['#30b830', '#0c6c0c'];

const deal = (y, price, diff, gain) => `<rect x="262.500" y="${y}.5" width="75" height="19" fill="url(#gOrder)" stroke="#b03030"/><rect x="337.500" y="${y}.5" width="15" height="19" fill="#f4f4f4" stroke="#a8a8a8"/>` +
  `<text class="b" x="267" y="${y + 14}">-1 @ ${price}</text>${cross(345, y + 10, '#d83434', '#a01818')}` +
  (diff ? `<rect x="262.500" y="${y + 19}.5" width="116" height="18" rx="2" fill="#fafafa" stroke="#a8a8a8"/><path d="M314.500 ${y + 20}v18" stroke="#a8a8a8"/><text class="b" fill="#a00008" x="267" y="${y + 33}">${diff}</text><text class="b" fill="#a00008" x="319" y="${y + 33}">${gain}</text>` : '');

put(byId('mainMarks'),
  cross(889, 503, ...pink) + arrow(1563, 547, 1, ...pink) + square(985, 547, ...pink) + arrow(889, 583, -1, ...cyan) + arrow(985, 634, -1, ...cyan) + square(1564, 656, ...cyan) + square(311, 712, ...cyan) +
  tri(869, 550, 1, ...cyan) + tri(965, 561, 1, ...cyan) + tri(1543, 572, 1, ...cyan) + tri(910, 521, -1, ...pink) + tri(1005, 608, -1, ...pink) + tri(1583, 619, -1, ...pink) +
  [[858, '1@1,35362'], [954, '1@1,35027'], [1532, '1@1,34986']].map(([x, t]) => tag(x, 399, 63, t, '#ccc8ff', '#d8c0f8')).join('') +
  [[858, '1@1,35249'], [954, '1@1,35207'], [1532, '1@1,35166']].map(([x, t]) => tag(x, 804, 63, t, '#7ce4fc', '#00c0ff')).join('') +
  `<rect x="262.500" y="680" width="114" height="22" rx="2" fill="#fafafa" stroke="#a8a8a8"/><path d="M316.500 684v18" stroke="#a8a8a8"/><text class="b" fill="#0c8c0c" x="267" y="698">+0,05469</text><text class="b" fill="#0c8c0c" x="321" y="698">5 469,00 $</text>` +
  deal(711, '1,28970', '-0,05819', '-5 819,00 $') + deal(758, '1,28956', '-0,05833', '-5 833,00 $') + deal(805, '1,28956') +
  '<text class="it" x="353" y="819">Données indicatives</text>');

put(byId('popMarks'),
  cross(36, 612, ...red) + cross(111, 587, ...red) + cross(413, 505, ...red) + cross(639, 592, ...green) + arrow(375, 537, -1, ...green) + arrow(639, 505, 1, ...red) +
  tri(131, 590, 1, ...green) + tri(357, 510, 1, ...green) + tri(621, 526, 1, ...green) + tri(431, 545, -1, ...red) + tri(657, 562, -1, ...red) +
  [[88, 48, '2 ordres'], [382, 63, '1@1,35069'], [608, 63, '1@1,34986']].map(([x, w, t]) => tag(x, 437, w, t, '#f8b4bc', '#f890a0')).join('') +
  [[43, '1@1,34570'], [118, '1@1,34840'], [344, '1@1,35249'], [608, '1@1,35166']].map(([x, t]) => tag(x, 598, 63, t, '#b4e8bc', '#20a828')).join('') +
  arrow(111, 607, 1, ...red) + '<text x="17" y="613">© IT-Finance.com</text><text class="it" x="107" y="613">Données indicatives</text>');
```
